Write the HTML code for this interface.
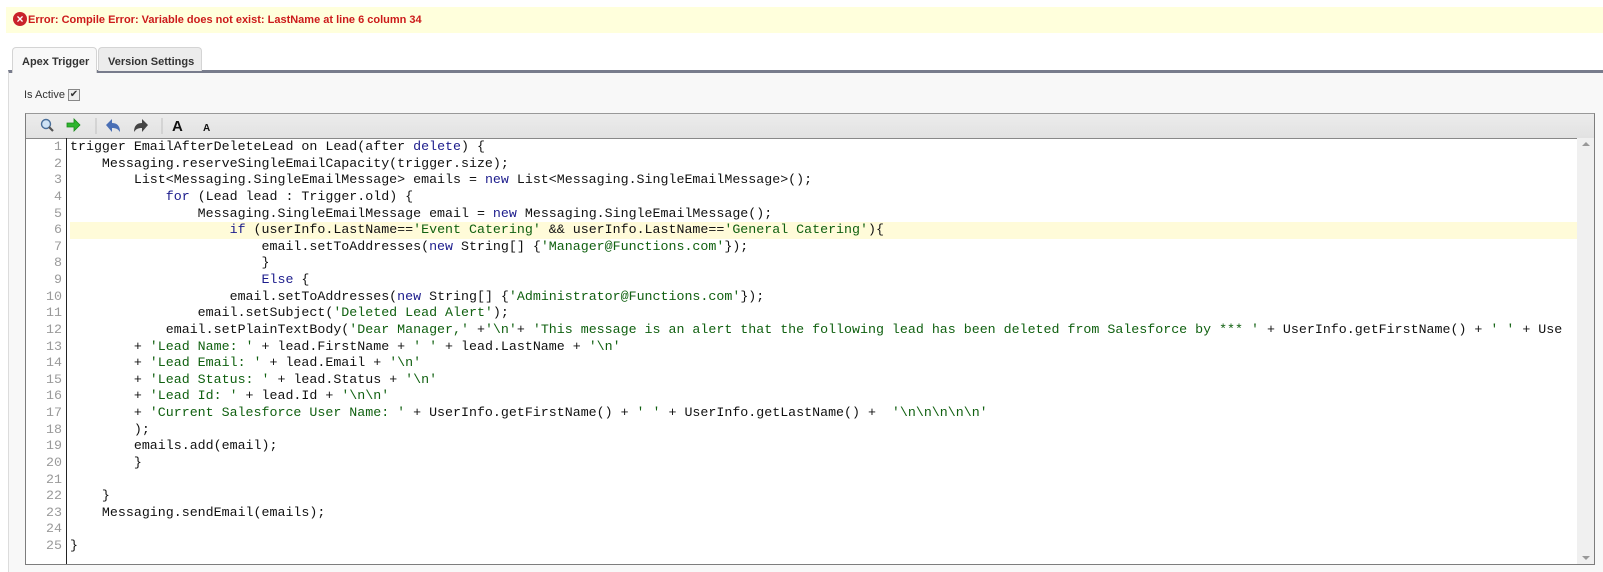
<!DOCTYPE html>
<html><head><style>
body{margin:0;width:1603px;height:572px;background:#fff;font-family:"Liberation Sans",Arial,sans-serif;position:relative;overflow:hidden}
.err{position:absolute;left:6px;top:7px;width:1597px;height:26px;background:#ffffdc}
.err span{position:absolute;left:22px;top:7px;font-size:11px;font-weight:bold;color:#cc1b1b}
.err i{position:absolute;left:7px;top:5px;width:14px;height:14px;border-radius:50%;background:#c9232b;color:#fff;font-style:normal;font-size:12px;line-height:14px;text-align:center;font-weight:bold}
.tab{position:absolute;top:47px;height:24px;font-size:11px;font-weight:bold;color:#333;border:1px solid #d4d4d4;border-bottom:none;border-radius:4px 4px 0 0;box-sizing:border-box;padding:8px 0 0 9px}
.panel{position:absolute;left:8px;top:70px;width:1595px;height:502px;background:#f8f8f8;border-top:3px solid #787c8c;border-left:1px solid #dcdcdc;box-sizing:border-box}
.editor{position:absolute;left:25px;top:113px;width:1570px;height:452px;border:1px solid #7d7d7d;border-top:1px solid #999;background:#fff;box-sizing:border-box}
.tb{position:absolute;left:0;top:0;right:0;height:24px;background:linear-gradient(#ececec,#e2e2e2);border-bottom:1px solid #888}
.gut{position:absolute;left:0;top:24px;width:41px;bottom:0;border-right:1px solid #222;text-align:right;font-family:"Liberation Mono",monospace;font-size:13.3px;line-height:16.63px;color:#9a9a9a;padding-right:4px;box-sizing:border-box;padding-top:1px}
.code{position:absolute;left:44px;top:25px;right:17px;bottom:0;font-family:"Liberation Mono",monospace;font-size:13.3px;line-height:16.63px;color:#111;white-space:pre;overflow:hidden}
.code div{height:16.63px;overflow:hidden}
.clip{position:absolute;left:1520px;top:24px;width:33px;bottom:0;background:#fff}
.k{color:#1c1c8c}.s{color:#106010}
.hl{background:#fffbd9}
.sb{position:absolute;right:0;top:24px;width:17px;bottom:0;background:#f0f0f0}
</style></head><body>
<div class="err"><i>×</i><span>Error: Compile Error: Variable does not exist: LastName at line 6 column 34</span></div>
<div class="panel"></div>
<div class="tab" style="left:12px;width:85px;height:26px;background:#f8f8f8;z-index:2">Apex Trigger</div>
<div class="tab" style="left:98px;width:104px;background:#ececec">Version Settings</div>
<div style="position:absolute;left:24px;top:89px;font-size:11px;color:#333">Is Active</div>
<div style="position:absolute;left:68px;top:89px;width:10px;height:10px;border:1px solid #888;background:#eee;font-size:10px;line-height:10px;text-align:center;color:#333">✔</div>
<div class="editor">
<div class="tb">
<svg width="200" height="24" style="position:absolute;left:0;top:0">
<circle cx="20" cy="10" r="4.5" fill="#cfe3f5" stroke="#4a6f9a" stroke-width="1.4"/><line x1="23" y1="13" x2="27" y2="17" stroke="#555" stroke-width="2.2"/>
<path d="M41 9h7v-4l6 6-6 6v-4h-7z" fill="#2fb52f" stroke="#1a8a1a" stroke-width=".8"/>
<line x1="70" y1="4" x2="70" y2="20" stroke="#c0c0c0"/>
<path d="M80 11l6-6v4c6 0 8 4 8 9-2-3-4-4-8-4v4z" fill="#4a6fb5"/>
<path d="M122 11l-6-6v4c-6 0-8 4-8 9 2-3 4-4 8-4v4z" fill="#444"/>
<line x1="136" y1="4" x2="136" y2="20" stroke="#c0c0c0"/>
<text x="146" y="17" font-family="Liberation Sans" font-weight="bold" font-size="15" fill="#111">A</text>
<text x="177" y="17" font-family="Liberation Sans" font-weight="bold" font-size="10" fill="#111">A</text>
</svg>
</div>
<div class="gut">1<br>2<br>3<br>4<br>5<br>6<br>7<br>8<br>9<br>10<br>11<br>12<br>13<br>14<br>15<br>16<br>17<br>18<br>19<br>20<br>21<br>22<br>23<br>24<br>25</div>
<div class="code"><div>trigger EmailAfterDeleteLead on Lead(after <span class="k">delete</span>) {</div><div>    Messaging.reserveSingleEmailCapacity(trigger.size);</div><div>        List&lt;Messaging.SingleEmailMessage&gt; emails = <span class="k">new</span> List&lt;Messaging.SingleEmailMessage&gt;();</div><div>            <span class="k">for</span> (Lead lead : Trigger.old) {</div><div>                Messaging.SingleEmailMessage email = <span class="k">new</span> Messaging.SingleEmailMessage();</div><div class="hl">                    <span class="k">if</span> (userInfo.LastName==<span class="s">'Event Catering'</span> &amp;&amp; userInfo.LastName==<span class="s">'General Catering'</span>){</div><div>                        email.setToAddresses(<span class="k">new</span> String[] {<span class="s">'Manager@Functions.com'</span>});</div><div>                        }</div><div>                        <span class="k">Else</span> {</div><div>                    email.setToAddresses(<span class="k">new</span> String[] {<span class="s">'Administrator@Functions.com'</span>});</div><div>                email.setSubject(<span class="s">'Deleted Lead Alert'</span>);</div><div>            email.setPlainTextBody(<span class="s">'Dear Manager,'</span> +<span class="s">'\n'</span>+ <span class="s">'This message is an alert that the following lead has been deleted from Salesforce by *** '</span> + UserInfo.getFirstName() + <span class="s">' '</span> + Use</div><div>        + <span class="s">'Lead Name: '</span> + lead.FirstName + <span class="s">' '</span> + lead.LastName + <span class="s">'\n'</span></div><div>        + <span class="s">'Lead Email: '</span> + lead.Email + <span class="s">'\n'</span></div><div>        + <span class="s">'Lead Status: '</span> + lead.Status + <span class="s">'\n'</span></div><div>        + <span class="s">'Lead Id: '</span> + lead.Id + <span class="s">'\n\n'</span></div><div>        + <span class="s">'Current Salesforce User Name: '</span> + UserInfo.getFirstName() + <span class="s">' '</span> + UserInfo.getLastName() +  <span class="s">'\n\n\n\n\n'</span></div><div>        );</div><div>        emails.add(email);</div><div>        }</div><div> </div><div>    }</div><div>    Messaging.sendEmail(emails);</div><div> </div><div>}</div></div>
<div class="sb"><div style="position:absolute;left:5px;top:4px;border:4px solid transparent;border-bottom:4px solid #999;border-top:none"></div><div style="position:absolute;left:5px;bottom:4px;border:4px solid transparent;border-top:4px solid #999;border-bottom:none"></div></div>
</div>
</body></html>
